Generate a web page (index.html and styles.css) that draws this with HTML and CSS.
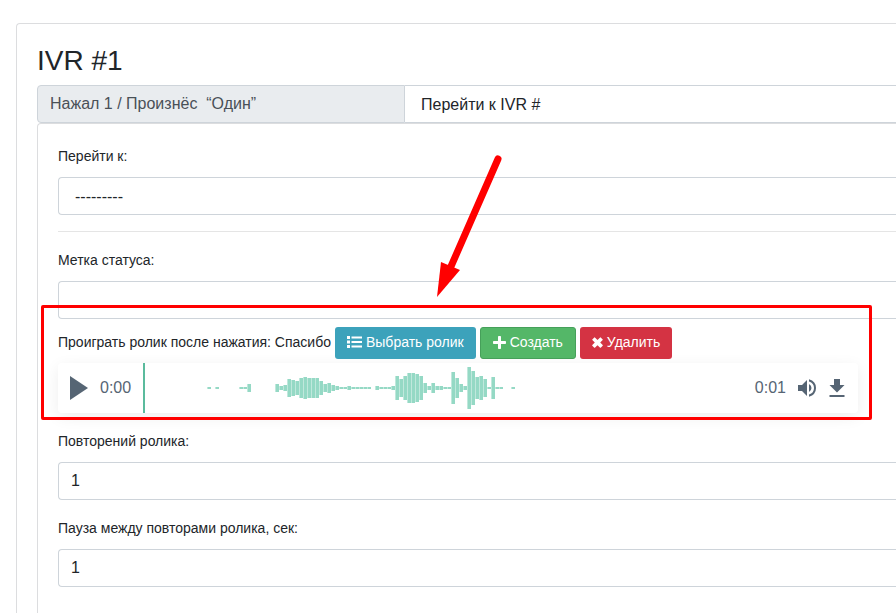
FILE: index.html
```
<!DOCTYPE html>
<html lang="ru">

<head>
    <meta charset="UTF-8">
    <meta name="viewport" content="width=device-width, initial-scale=1.0">
    <title>IVR #1</title>

    <link rel="stylesheet" href="styles.css">
</head>

<body>

    <main class="card">
        <h3 class="card--title">IVR #1</h3>

        <div class="input-group">
            <label class="input-group--text" for="action">Нажал 1 / Произнёс &nbsp;“Один”</label>
            <select class="form-control" id="action">
                <option>Перейти к IVR #</option>
            </select>
        </div>

        <form class="card--inner">
            <label class="form-label" for="goto">Перейти к:</label>
            <select class="form-control" id="goto">
                <option>---------</option>
            </select>

            <hr class="divider">

            <label class="form-label" for="status">Метка статуса:</label>
            <input class="form-control" type="text" id="status">

            <div class="clip">
                <div class="clip--bar">
                    <span class="clip--name">Проиграть ролик после нажатия: Спасибо</span>
                    <button type="button" class="btn btn-info">
                        <svg width="15" height="12" viewBox="0 0 15 12" fill="currentColor">
                            <path d="M0 0h3v3H0zM0 4.500h3v3H0zM0 9h3v3H0zM4.500.5H15v2H4.500zM4.500 5H15v2H4.500zM4.500 9.500H15v2H4.500z" />
                        </svg>
                        Выбрать ролик
                    </button>
                    <button type="button" class="btn btn-success">
                        <svg width="13" height="13" viewBox="0 0 13 13" fill="currentColor">
                            <path d="M5 .8Q5 0 5.800 0h1.400Q8 0 8 .8V5h4.200q.8 0 .8.8v1.400q0 .8-.8.8H8v4.200q0 .8-.8.8H5.800q-.8 0-.8-.8V8H.8Q0 8 0 7.200V5.800Q0 5 .8 5H5z" />
                        </svg>
                        Создать
                    </button>
                    <button type="button" class="btn btn-danger">
                        <svg width="11" height="11" viewBox="0 0 11 11" fill="currentColor">
                            <path d="M.3 2.500 2.300.4q.3-.3.600 0L5.500 3 8.100.4q.3-.3.600 0l2 2.100q.3.3 0 .6L8.200 5.600l2.500 2.500q.3.3 0 .6l-2 2q-.3.3-.6 0L5.500 8.200l-2.600 2.500q-.3.3-.6 0l-2-2q-.3-.3 0-.6l2.500-2.500L.3 3.100q-.3-.3 0-.6z" />
                        </svg>
                        Удалить
                    </button>
                </div>

                <div class="player">
                    <button type="button" class="player--btn" aria-label="Воспроизвести">
                        <svg width="18" height="24" viewBox="0 0 18 24" fill="currentColor">
                            <path d="M18 12 0 24V0z" />
                        </svg>
                    </button>
                    <span class="player--time">0:00</span>
                    <div class="player--wave">
                        <svg width="400" height="50" viewBox="0 0 400 50" fill="none">
                            <path stroke="#c0e8dc" stroke-width="4" d="M66 24v2M74 24v2M98 24v2M102 24v2M106 21v8M134 21v8M138 23v4M142 22v6M146 16v18M150 17v16M154 18v14M158 15v20M162 14v22M166 15v20M170 15v20M174 15v20M178 18v14M182 21v8M186 20v10M190 22v6M194 23v4M198 24v2M202 24v2M206 23v4M210 24v2M214 24v2M218 24v2M222 24v2M226 24v2M234 23v4M238 24v2M242 24v2M246 24v2M250 23v4M254 13v24M258 16v18M262 13v24M266 10v30M270 10v30M274 11v28M278 13v24M282 20v10M286 23v4M290 20v10M294 23v4M298 23v4M302 24v2M306 24v2M310 9v32M314 15v20M318 21v8M322 23v4M326 4v42M330 8v34M334 14v22M338 13v24M342 16v18M346 24v2M350 14v22M354 24v2M358 24v2M370 24v2" />
                            <path stroke="#95d9c5" stroke-width="3" transform="translate(.5)" d="M66 24v2M74 24v2M98 24v2M102 24v2M106 21v8M134 21v8M138 23v4M142 22v6M146 16v18M150 17v16M154 18v14M158 15v20M162 14v22M166 15v20M170 15v20M174 15v20M178 18v14M182 21v8M186 20v10M190 22v6M194 23v4M198 24v2M202 24v2M206 23v4M210 24v2M214 24v2M218 24v2M222 24v2M226 24v2M234 23v4M238 24v2M242 24v2M246 24v2M250 23v4M254 13v24M258 16v18M262 13v24M266 10v30M270 10v30M274 11v28M278 13v24M282 20v10M286 23v4M290 20v10M294 23v4M298 23v4M302 24v2M306 24v2M310 9v32M314 15v20M318 21v8M322 23v4M326 4v42M330 8v34M334 14v22M338 13v24M342 16v18M346 24v2M350 14v22M354 24v2M358 24v2M370 24v2" />
                        </svg>
                    </div>
                    <span class="player--time">0:01</span>
                    <button type="button" class="player--btn" aria-label="Громкость">
                        <svg width="18" height="18" viewBox="0 0 18 18" fill="currentColor">
                            <path d="M0 6v6h4l5 5V1L4 6zM11 5v8q2.500-1.300 2.500-4T11 5zM11 .3v2.100q5 1.600 5 6.600t-5 6.600v2.100q7-2 7-8.700T11 .3z" />
                        </svg>
                    </button>
                    <button type="button" class="player--btn" aria-label="Скачать">
                        <svg width="18" height="20" viewBox="0 0 18 20" fill="currentColor">
                            <path d="M6 1h6v6h4.500L9 14.500 1.500 7H6zM1.500 17h15v2h-15z" />
                        </svg>
                    </button>
                </div>

                <!-- callout -->
                <div class="callout"></div>
                <svg class="callout-arrow" width="70" height="145" viewBox="0 0 70 145">
                    <path d="M63 5 14 117" stroke="#f00" stroke-width="7" stroke-linecap="round" />
                    <path d="M2 143 6 108 25 116z" fill="#f00" />
                </svg>
            </div>

            <label class="form-label" for="repeats">Повторений ролика:</label>
            <input class="form-control form-group" type="text" id="repeats" value="1">

            <label class="form-label" for="pause">Пауза между повторами ролика, сек:</label>
            <input class="form-control" type="text" id="pause" value="1">
        </form>
    </main>

</body>

</html>
```
FILE: styles.css
```
/* Variables */
:root {
    --color-text: #212529;
    --color-border: #ced4da;
    --color-card-border: #dcdddf;
    --color-player: #566574;
    --color-callout: #ff0000;
}

/* Base */
* {
    box-sizing: border-box;
}

body {
    margin: 0;
    font-family: "Liberation Sans", Arial, sans-serif;
    font-size: 14px;
    color: var(--color-text);
    background-color: #ffffff;
    overflow: hidden;
}

/* Cards */
.card {
    margin: 23px 0 0 16px;
    padding: 20px 0 20px 20px;
    border: 1px solid var(--color-card-border);
    border-right: 0;
    border-radius: 4px 0 0 4px;
}

.card--title {
    margin: 0 0 8px;
    font-size: 28px;
    font-weight: 400;
    line-height: 33px;
}

.card--inner {
    padding: 20px 0 40px 20px;
    border: 1px solid var(--color-card-border);
    border-right: 0;
    border-radius: 4px 0 0 4px;
}

/* Forms */
.form-label {
    display: block;
    margin-bottom: 8px;
    line-height: 25px;
}

.form-control {
    display: block;
    width: 100%;
    height: 38px;
    padding: 0 12px;
    font-family: inherit;
    font-size: 16px;
    color: var(--color-text);
    background-color: #ffffff;
    border: 1px solid var(--color-border);
    border-right: 0;
    border-radius: 4px 0 0 4px;
    appearance: none;
}

select.form-control {
    padding-left: 16px;
}

.form-group {
    margin-bottom: 16px;
}

.input-group {
    display: flex;
}

.input-group--text {
    flex: 0 0 368px;
    height: 38px;
    padding: 0 12px;
    font-size: 16px;
    line-height: 36px;
    color: #495057;
    background-color: #e9ecef;
    border: 1px solid var(--color-border);
    border-radius: 4px 0 0 4px;
}

.input-group .form-control {
    flex: 1;
    border-left: 0;
    border-radius: 0;
}

.divider {
    margin: 16px 0;
    border: 0;
    border-top: 1px solid #e5e5e5;
}

/* Clip */
.clip {
    position: relative;
    max-width: 800px;
    margin: 8px 0 16px;
}

.clip--bar {
    display: flex;
    align-items: center;
    gap: 4px;
    margin-bottom: 4px;
}

.clip--name {
    padding-bottom: 2px;
}

.btn {
    display: flex;
    align-items: center;
    gap: 4px;
    height: 32px;
    padding: 0 12px 2px;
    font-family: inherit;
    font-size: 14px;
    color: #ffffff;
    border: 0;
    border-radius: 3px;
}

.btn-info {
    background-color: #3ca2bb;
}

.btn-success {
    background-color: #54b768;
    border: 1px solid #46a05a;
}

.btn-danger {
    background-color: #d43343;
}

/* Player */
.player {
    display: flex;
    align-items: center;
    gap: 12px;
    height: 50px;
    padding: 0 12px;
    color: var(--color-player);
    background-color: #ffffff;
    border-radius: 4px;
    box-shadow: 0 4px 16px rgba(0, 0, 0, 0.07);
}

.player--btn {
    display: flex;
    padding: 0;
    color: inherit;
    background: none;
    border: 0;
}

.player--time {
    font-size: 16px;
}

.player--wave {
    flex: 1;
    height: 50px;
    overflow: hidden;
    background: linear-gradient(#5bbb9d, #5bbb9d) left / 2px 100% no-repeat;
}

/* Callout */
.callout {
    position: absolute;
    top: -22px;
    left: -17px;
    right: -14px;
    bottom: -7px;
    border: 3px solid var(--color-callout);
    border-radius: 2px;
    pointer-events: none;
}

.callout-arrow {
    position: absolute;
    top: -173px;
    left: 377px;
    pointer-events: none;
}
```
